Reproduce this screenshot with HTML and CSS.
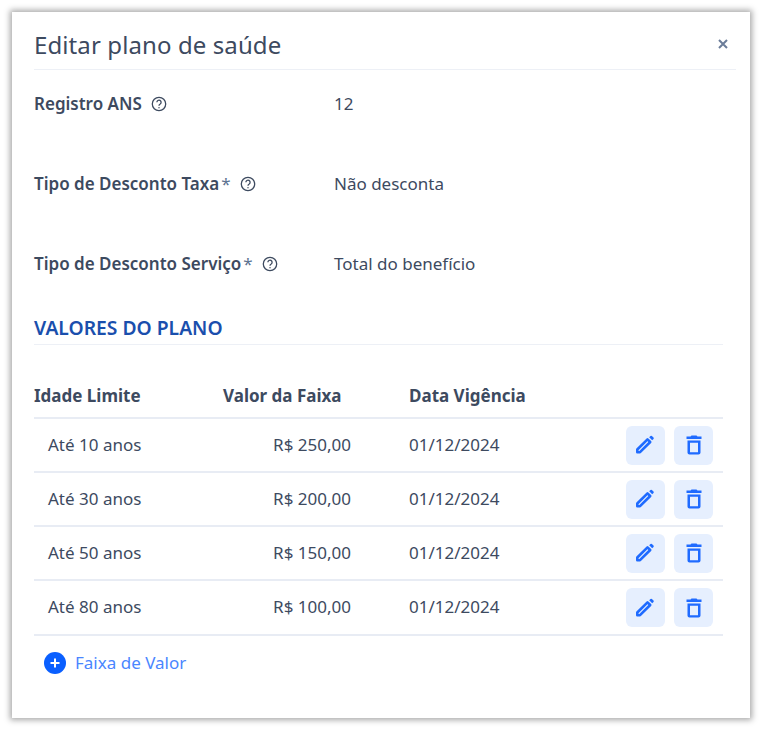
FILE: index.html
```html
<!DOCTYPE html>
<html lang="pt-BR">
<head>
  <meta charset="UTF-8">
  <meta name="viewport" content="width=device-width, initial-scale=1.0">
  <title>Editar plano de saúde</title>
  <link rel="stylesheet" href="styles.css">
</head>
<body>
  <div class="modal">
    <div class="modal-header">
      <h2>Editar plano de saúde</h2>
      <svg class="close-icon" viewBox="0 0 12 12" width="12" height="12"><path d="M2 2l8 8M10 2l-8 8"/></svg>
    </div>

    <div class="field">
      <div class="field-label">
        <span>Registro ANS</span>
        <svg class="help-icon" viewBox="0 0 16 16" width="16" height="16"><circle cx="8" cy="8" r="6.7"/><path d="M5.9 6.3a2.1 2.1 0 1 1 3.3 1.7c-.8.5-1.2.9-1.2 1.7"/><path class="dot" d="M8 11.2v1"/></svg>
      </div>
      <div class="field-value">12</div>
    </div>
    <div class="field">
      <div class="field-label">
        <span>Tipo de Desconto Taxa<i class="req">*</i></span>
        <svg class="help-icon" viewBox="0 0 16 16" width="16" height="16"><circle cx="8" cy="8" r="6.7"/><path d="M5.9 6.3a2.1 2.1 0 1 1 3.3 1.7c-.8.5-1.2.9-1.2 1.7"/><path class="dot" d="M8 11.2v1"/></svg>
      </div>
      <div class="field-value">Não desconta</div>
    </div>
    <div class="field">
      <div class="field-label">
        <span>Tipo de Desconto Serviço<i class="req">*</i></span>
        <svg class="help-icon" viewBox="0 0 16 16" width="16" height="16"><circle cx="8" cy="8" r="6.7"/><path d="M5.9 6.3a2.1 2.1 0 1 1 3.3 1.7c-.8.5-1.2.9-1.2 1.7"/><path class="dot" d="M8 11.2v1"/></svg>
      </div>
      <div class="field-value">Total do benefício</div>
    </div>

    <div class="section">
      <h3>VALORES DO PLANO</h3>
      <table>
        <thead>
          <tr>
            <th class="col-age">Idade Limite</th>
            <th class="col-value">Valor da Faixa</th>
            <th class="col-date">Data Vigência</th>
            <th></th>
          </tr>
        </thead>
        <tbody>
          <tr>
            <td class="age">Até 10 anos</td>
            <td class="value">R$ 250,00</td>
            <td>01/12/2024</td>
            <td>
              <div class="actions">
                <button><svg viewBox="0 0 24 24" width="24" height="24"><path class="pen-body" d="M3.300 19.200v-2.700l10.200-10.200 2.700 2.700L6 19.200z"/><path d="M15.200 4.300l1.300-1.300a1 1 0 0 1 1.400 0l1.600 1.600a1 1 0 0 1 0 1.400l-1.300 1.300z"/></svg></button>
                <button><svg viewBox="0 0 24 24" width="24" height="24"><path d="M5.500 7.500v12c0 1.100.9 2 2 2h9c1.100 0 2-.9 2-2v-12h-13zm2.500 2.200h8v9.500H8V9.700zM15.500 3.500l-1-1h-5l-1 1H4.500v2.500h15V3.500h-4z"/></svg></button>
              </div>
            </td>
          </tr>
          <tr>
            <td class="age">Até 30 anos</td>
            <td class="value">R$ 200,00</td>
            <td>01/12/2024</td>
            <td>
              <div class="actions">
                <button><svg viewBox="0 0 24 24" width="24" height="24"><path class="pen-body" d="M3.300 19.200v-2.700l10.200-10.200 2.700 2.700L6 19.200z"/><path d="M15.200 4.300l1.300-1.300a1 1 0 0 1 1.400 0l1.600 1.600a1 1 0 0 1 0 1.400l-1.300 1.300z"/></svg></button>
                <button><svg viewBox="0 0 24 24" width="24" height="24"><path d="M5.500 7.500v12c0 1.100.9 2 2 2h9c1.100 0 2-.9 2-2v-12h-13zm2.500 2.200h8v9.500H8V9.700zM15.500 3.500l-1-1h-5l-1 1H4.500v2.500h15V3.500h-4z"/></svg></button>
              </div>
            </td>
          </tr>
          <tr>
            <td class="age">Até 50 anos</td>
            <td class="value">R$ 150,00</td>
            <td>01/12/2024</td>
            <td>
              <div class="actions">
                <button><svg viewBox="0 0 24 24" width="24" height="24"><path class="pen-body" d="M3.300 19.200v-2.700l10.200-10.200 2.700 2.700L6 19.200z"/><path d="M15.200 4.300l1.300-1.300a1 1 0 0 1 1.400 0l1.600 1.600a1 1 0 0 1 0 1.400l-1.300 1.300z"/></svg></button>
                <button><svg viewBox="0 0 24 24" width="24" height="24"><path d="M5.500 7.500v12c0 1.100.9 2 2 2h9c1.100 0 2-.9 2-2v-12h-13zm2.500 2.200h8v9.500H8V9.700zM15.500 3.500l-1-1h-5l-1 1H4.500v2.500h15V3.500h-4z"/></svg></button>
              </div>
            </td>
          </tr>
          <tr>
            <td class="age">Até 80 anos</td>
            <td class="value">R$ 100,00</td>
            <td>01/12/2024</td>
            <td>
              <div class="actions">
                <button><svg viewBox="0 0 24 24" width="24" height="24"><path class="pen-body" d="M3.300 19.200v-2.700l10.200-10.200 2.700 2.700L6 19.200z"/><path d="M15.200 4.300l1.300-1.300a1 1 0 0 1 1.400 0l1.600 1.600a1 1 0 0 1 0 1.400l-1.300 1.300z"/></svg></button>
                <button><svg viewBox="0 0 24 24" width="24" height="24"><path d="M5.500 7.500v12c0 1.100.9 2 2 2h9c1.100 0 2-.9 2-2v-12h-13zm2.500 2.200h8v9.500H8V9.700zM15.500 3.500l-1-1h-5l-1 1H4.500v2.500h15V3.500h-4z"/></svg></button>
              </div>
            </td>
          </tr>
        </tbody>
      </table>
      <div class="add-row">
        <svg viewBox="0 0 22 22" width="22" height="22"><circle class="add-bg" cx="11" cy="11" r="11"/><path class="add-plus" d="M11 6.500v9M6.500 11h9"/></svg>
        <span>Faixa de Valor</span>
      </div>
    </div>
  </div>
</body>
</html>
```

FILE: styles.css
```css
* { box-sizing: border-box; }
body { margin: 0; padding: 12px; background: #fff; font-family: "Noto Sans", sans-serif; font-size: 17px; color: #3d4a5f; }
.modal { width: 738px; height: 706px; padding: 0 14px 0 22px; background: #fff; box-shadow: 0 0 6px 2px rgba(0,0,0,0.35); }
.modal-header { display: flex; align-items: center; justify-content: space-between; height: 58px; padding: 7px 7px 0 0; border-bottom: 1px solid #edf0f6; }
h2 { margin: 0; font-size: 24px; font-weight: 400; letter-spacing: 0.1px; color: #3d4a5f; }
.close-icon { fill: none; stroke: #6b7c99; stroke-width: 2; }
.field { display: flex; height: 80px; padding-top: 22px; line-height: 24px; }
.field-label { display: flex; align-items: center; gap: 9px; width: 300px; height: 24px; font-weight: 600; }
.req { margin-left: 2px; font-style: normal; font-weight: 400; color: #5d7391; }
.help-icon { fill: none; stroke: #3d4a5f; stroke-width: 1.300; }
.help-icon .dot { stroke-width: 1.500; }
.section { width: 689px; margin-top: 2px; }
h3 { margin: 0; height: 33px; padding-top: 4px; font-size: 19.3px; line-height: 24px; font-weight: 600; color: #1a4fad; border-bottom: 1px solid #edf0f6; }
table { width: 100%; margin-top: 27px; border-collapse: collapse; table-layout: fixed; }
th { height: 46px; padding: 2px 0 0 14px; text-align: left; font-weight: 700; border-bottom: 2px solid #e8ecf4; }
.col-age { width: 175px; padding-left: 0; }
.col-value { width: 186px; }
.col-date { width: 190px; }
td { height: 54px; padding: 0 0 2px 14px; border-bottom: 2px solid #e8ecf4; }
td:last-child { padding-bottom: 0; }
tbody tr:last-child td { height: 55px; }
td.value { padding-right: 44px; text-align: right; }
.actions { display: flex; justify-content: flex-end; gap: 9px; padding-right: 10px; }
button { display: flex; align-items: center; justify-content: center; width: 39px; height: 39px; padding: 0; background: #e6effe; border: none; border-radius: 6px; }
button svg { fill: #1f6bff; }
button svg .pen-body { fill: none; stroke: #1f6bff; stroke-width: 2.600; stroke-linejoin: round; }
.add-row { display: flex; align-items: center; gap: 9px; margin: 15px 0 0 10px; color: #4a86ff; }
.add-bg { fill: #0a5fff; }
.add-plus { fill: none; stroke: #fff; stroke-width: 2; }
```
